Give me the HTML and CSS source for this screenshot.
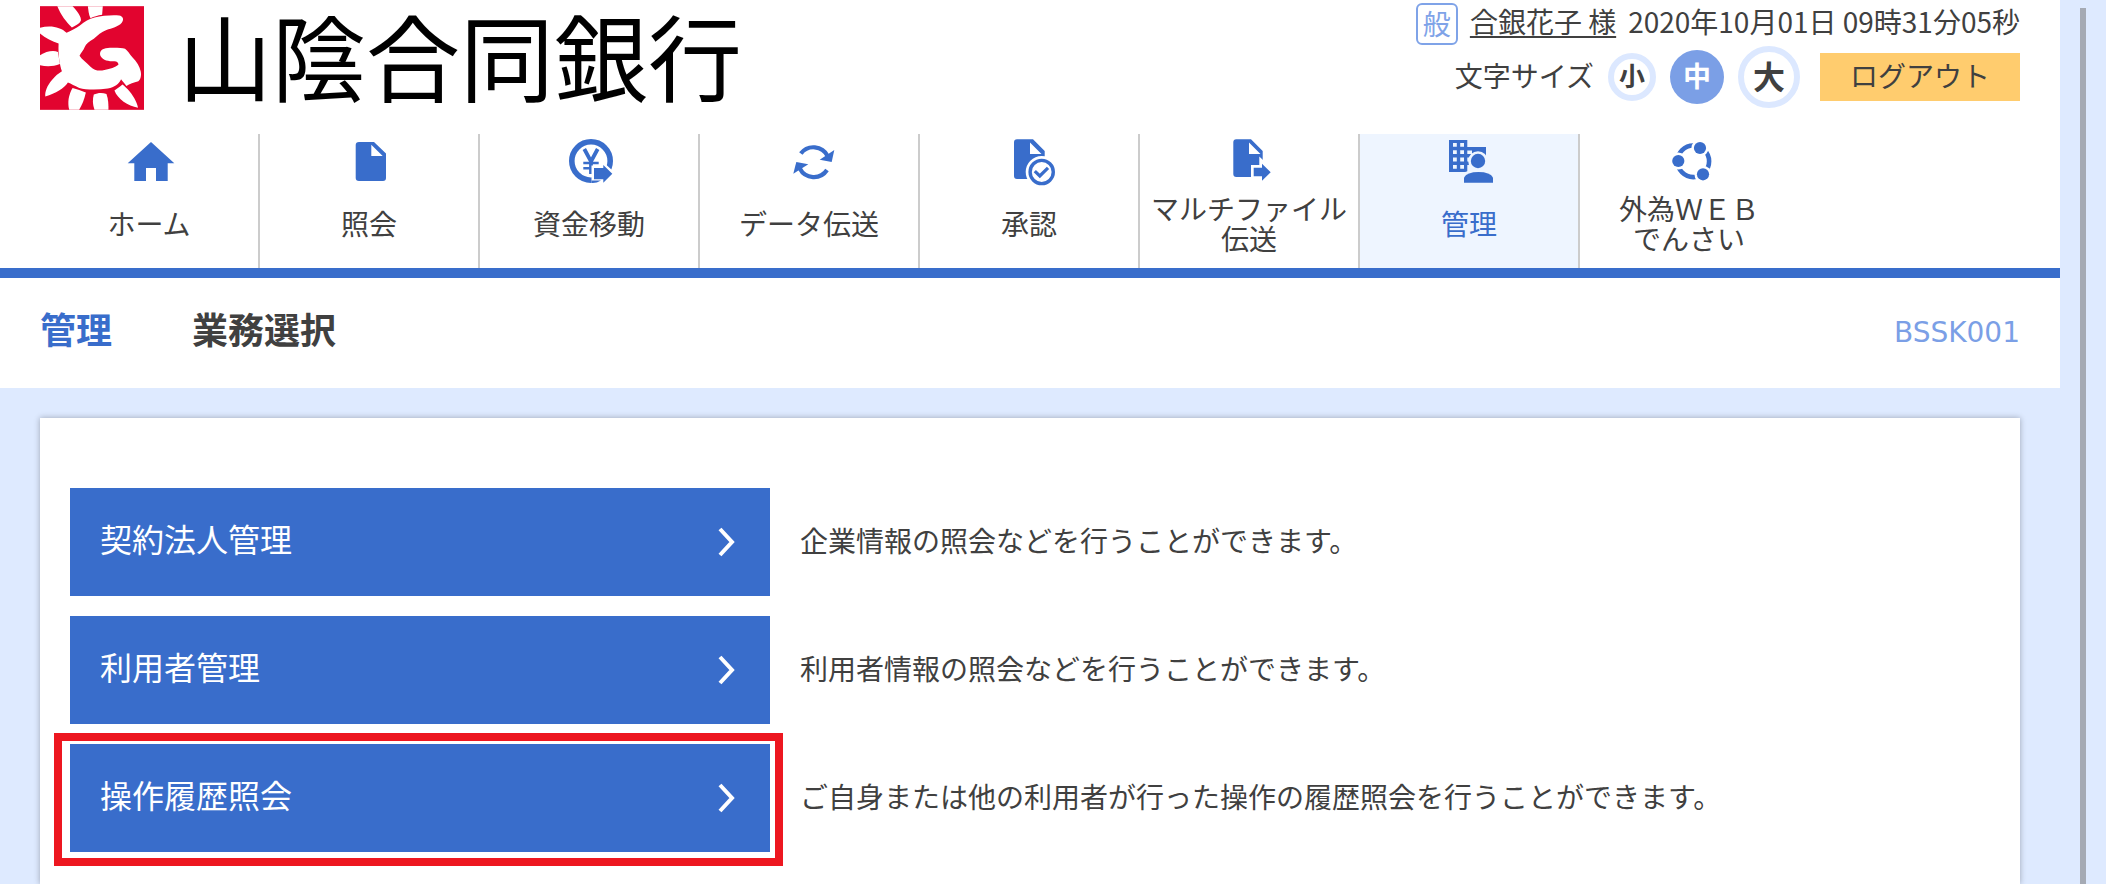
FILE: index.html
```html
<!DOCTYPE html>
<html lang="ja">
<head>
    <meta charset="UTF-8">
    <meta name="viewport" content="width=device-width, initial-scale=1.0">
    <title>業務選択</title>
    <link rel="stylesheet" href="styles.css">
</head>
<body>
    <div class="page">
        <header class="header">
            <div class="brand">
                <svg class="brand-mark" viewBox="12 12 313 312" aria-hidden="true">
                    <rect x="12" y="12" width="313" height="312" fill="#e2042f"/>
                    <g fill="#fff">
                        <path d="M92 92 C108 84 120 78 132 70 C146 58 160 50 176 46 C200 40 232 38 250 40 C262 42 266 52 258 62 C248 74 228 78 212 84 C196 90 186 100 174 110 C160 118 150 126 147 134 C142 146 136 152 131 161 C138 172 152 182 164 194 C176 206 190 208 206 204 C224 200 238 196 248 188 C248 182 244 178 236 178 C218 178 202 176 194 162 C190 150 196 142 210 139 C232 136 256 138 268 140 C276 146 282 156 290 166 C304 180 312 194 315 208 C318 222 314 234 308 238 C294 242 282 246 272 252 C266 244 260 238 256 232 C250 246 236 256 216 260 C186 264 150 264 130 258 C116 252 106 246 96 242 C84 260 60 274 28 284 C26 270 34 250 48 234 C58 222 68 214 78 208 C72 190 66 160 68 124 C50 118 28 108 12 94 L12 77 C42 68 74 74 92 92 Z"/>
                        <path d="M64 12 L110 12 C124 26 138 46 135 56 C130 66 120 70 108 76 C90 58 76 40 64 12 Z"/>
                        <path d="M156 12 L201 12 L199 38 C186 40 174 44 164 48 C158 36 158 24 156 12 Z"/>
                        <path d="M12 160 C30 148 52 144 66 150 L72 186 C52 194 32 194 12 190 Z"/>
                        <path d="M110 258 C124 262 136 266 150 272 C146 292 138 310 130 324 L100 324 C94 302 98 278 110 258 Z"/>
                        <path d="M174 278 C186 272 200 272 212 276 C218 292 218 308 218 324 L176 324 C170 308 170 292 174 278 Z"/>
                        <path d="M236 266 C244 260 254 254 260 248 C266 252 270 258 276 262 C292 280 304 300 307 318 C276 312 246 292 236 266 Z"/>
                    </g>
                </svg>
                <span class="brand-name">山陰合同銀行</span>
            </div>
            <div class="header-tools">
                <div class="user-row">
                    <span class="badge">般</span>
                    <a class="user-name" href="#">合銀花子 様</a>
                    <span class="login-time">2020年10月01日 09時31分05秒</span>
                </div>
                <div class="size-row">
                    <span class="size-label" id="size-label">文字サイズ</span>
                    <div class="size-buttons" role="group" aria-labelledby="size-label">
                        <button class="size-btn small" type="button">小</button>
                        <button class="size-btn medium" type="button" aria-pressed="true">中</button>
                        <button class="size-btn large" type="button">大</button>
                    </div>
                    <button class="logout-btn" type="button">ログアウト</button>
                </div>
            </div>
        </header>

        <nav class="nav">
            <a class="nav-item" href="#">
                <svg class="icon" viewBox="0 0 48 48" aria-hidden="true">
                    <path d="M26 5 L49.3 26.3 H42.7 V44 H31 V31 H21 V44 H9.3 V26.3 H2.7 Z"/>
                </svg>
                <span class="nav-label">ホーム</span>
            </a>
            <a class="nav-item" href="#">
                <svg class="icon" viewBox="0 0 48 48" aria-hidden="true">
                    <path fill-rule="evenodd" d="M14 5 H29 L41 16.5 V41 Q41 44 38 44 H14 Q10.7 44 10.7 41 V8 Q10.7 5 14 5 Z M26.3 7.7 V19 H37.7 Z"/>
                </svg>
                <span class="nav-label">照会</span>
            </a>
            <a class="nav-item" href="#">
                <svg class="icon" viewBox="0 0 48 48" aria-hidden="true">
                    <circle class="line" cx="26" cy="24" r="19.2" stroke-width="5.6"/>
                    <path class="line" stroke-width="3.8" d="M19.3 12 L26 24.5 L32.7 12 M26 23 V37"/>
                    <path class="line" stroke-width="2.6" d="M18.3 26 H33.7 M18.3 31.3 H33.7"/>
                    <path class="halo" d="M26.5 28.5 H36 V23 L51 36.7 L39 49 L36 46 H26.5 Z"/>
                    <path d="M29 31 H38.3 V28 L47.3 36.7 L38.3 45.7 V42.3 H29 Z"/>
                    <path d="M26.5 43.5 H36 Q31 46.5 26.5 46 Z"/>
                </svg>
                <span class="nav-label">資金移動</span>
            </a>
            <a class="nav-item" href="#">
                <svg class="icon" viewBox="0 0 48 48" aria-hidden="true">
                    <path class="line" stroke-width="4.2" d="M15.8 16.6 A15.8 15.8 0 0 1 42.6 19"/>
                    <path class="line" stroke-width="4.2" d="M42 33 A15.8 15.8 0 0 1 14.8 31.5"/>
                    <path d="M49.3 13 L46.7 25 L34.7 22.7 Z"/>
                    <path d="M11.3 25 L23.3 27.3 L8.3 36.7 Z"/>
                </svg>
                <span class="nav-label">データ伝送</span>
            </a>
            <a class="nav-item" href="#">
                <svg class="icon" viewBox="0 0 48 48" aria-hidden="true">
                    <path fill-rule="evenodd" d="M12 2.3 H28 L39.7 14 V42 H12 Q9 42 9 39 V5.3 Q9 2.3 12 2.3 Z M25 5.5 V17 H36.5 Z"/>
                    <circle class="halo" cx="36.7" cy="35" r="16"/>
                    <circle class="line" cx="36.7" cy="35" r="11.6" stroke-width="3.4"/>
                    <path class="line" stroke-width="3.2" d="M29.8 34.2 L34.8 39 L43 30.8"/>
                </svg>
                <span class="nav-label">承認</span>
            </a>
            <a class="nav-item" href="#">
                <svg class="icon" viewBox="0 0 48 48" aria-hidden="true">
                    <path fill-rule="evenodd" d="M11.3 2.3 H26 L37.7 14 V40 H11.3 Q8.3 40 8.3 37 V5.3 Q8.3 2.3 11.3 2.3 Z M24 5.5 V17 H35.5 Z"/>
                    <path class="halo" d="M26 28 H34.3 V19.5 L38 23 L48 35 L39 44 H26 Z"/>
                    <path d="M28.7 30.7 H37 V26.7 L45.7 35.2 L37 43.7 V39.3 H28.7 Z"/>
                </svg>
                <span class="nav-label">マルチファイル<br>伝送</span>
            </a>
            <a class="nav-item active" href="#">
                <svg class="icon" viewBox="0 0 48 48" aria-hidden="true">
                    <path d="M4 3 H22.3 V10 H41 V35 H4 Z"/>
                    <path class="halo" d="M8 6 h3.8 v3.8 h-3.8 Z M15.2 6 h3.8 v3.8 h-3.8 Z M8 13.3 h3.8 v3.8 h-3.8 Z M15.2 13.3 h3.8 v3.8 h-3.8 Z M8 20.6 h3.8 v3.8 h-3.8 Z M15.2 20.6 h3.8 v3.8 h-3.8 Z M8 27.9 h3.8 v3.8 h-3.8 Z M15.2 27.9 h3.8 v3.8 h-3.8 Z M22.3 13.6 H27 V17 H22.3 Z M22.3 20.6 H26 V24.4 H22.3 Z M22.3 28 H41 V35 H22.3 Z"/>
                    <circle class="halo" cx="33" cy="24" r="9.8"/>
                    <path class="halo" d="M16 46 V40 Q19 32.5 33 32.5 H42 V46 Z"/>
                    <circle cx="33" cy="24" r="7.2"/>
                    <path d="M19 45.7 V40.5 Q22 35 33.5 35 Q45 35 48 40.5 V45.7 Z"/>
                </svg>
                <span class="nav-label">管理</span>
            </a>
            <a class="nav-item" href="#">
                <svg class="icon" viewBox="0 0 48 48" aria-hidden="true">
                    <circle class="line" cx="28.3" cy="24.3" r="15.8" stroke-width="4.6"/>
                    <g class="halo">
                        <circle cx="13.3" cy="24" r="8.6"/>
                        <circle cx="35" cy="11" r="8.6"/>
                        <circle cx="38" cy="37.3" r="8.6"/>
                    </g>
                    <circle cx="13.3" cy="24" r="6.1"/>
                    <circle cx="35" cy="11" r="6.1"/>
                    <circle cx="38" cy="37.3" r="6.1"/>
                </svg>
                <span class="nav-label">外為ＷＥＢ<br>でんさい</span>
            </a>
        </nav>

        <div class="title-bar">
            <h1 class="category">管理</h1>
            <h2 class="screen-title">業務選択</h2>
            <span class="screen-id">BSSK001</span>
        </div>

        <main class="panel">
            <div class="menu-row">
                <a class="menu-btn" href="#">
                    <span class="menu-name">契約法人管理</span>
                    <svg class="chevron" viewBox="0 0 18 30" aria-hidden="true"><path d="M3 2 L15 15 L3 28"/></svg>
                </a>
                <p class="menu-text">企業情報の照会などを行うことができます。</p>
            </div>
            <div class="menu-row">
                <a class="menu-btn" href="#">
                    <span class="menu-name">利用者管理</span>
                    <svg class="chevron" viewBox="0 0 18 30" aria-hidden="true"><path d="M3 2 L15 15 L3 28"/></svg>
                </a>
                <p class="menu-text">利用者情報の照会などを行うことができます。</p>
            </div>
            <div class="menu-row">
                <a class="menu-btn marked" href="#">
                    <span class="menu-name">操作履歴照会</span>
                    <svg class="chevron" viewBox="0 0 18 30" aria-hidden="true"><path d="M3 2 L15 15 L3 28"/></svg>
                </a>
                <p class="menu-text">ご自身または他の利用者が行った操作の履歴照会を行うことができます。</p>
            </div>
        </main>
    </div>
    <div class="gutter">
        <div class="scroll-thumb"></div>
    </div>
</body>
</html>
```

FILE: styles.css
```css
* {
    box-sizing: border-box;
}
body {
    margin: 0;
    display: flex;
    min-height: 100vh;
    background-color: #deeaff;
    color: #404040;
    font-family: "Noto Sans CJK JP", sans-serif;
    font-size: 28px;
}
a {
    color: inherit;
    text-decoration: none;
}
button {
    font-family: inherit;
    color: inherit;
    padding: 0;
    border: none;
    cursor: pointer;
}
.page {
    flex: 1;
    min-width: 0;
    display: flex;
    flex-direction: column;
}

/* header */
.header {
    display: flex;
    justify-content: space-between;
    align-items: flex-start;
    padding: 0 40px 24px;
    background-color: white;
}
.brand {
    display: flex;
    align-items: flex-start;
    gap: 34px;
    padding-top: 6px;
}
.brand-mark {
    width: 104px;
    height: 104px;
}
.brand-name {
    font-size: 94px;
    line-height: 96px;
    color: black;
    white-space: nowrap;
}
.header-tools {
    display: flex;
    flex-direction: column;
    align-items: flex-end;
    gap: 1px;
    padding-top: 3px;
    white-space: nowrap;
}
.user-row {
    display: flex;
    line-height: 36px;
}
.badge {
    width: 42px;
    height: 42px;
    margin-right: 12px;
    border: 2px solid #7fa3e8;
    border-radius: 6px;
    color: #7fa3e8;
    line-height: 36px;
    text-align: center;
}
.user-name {
    margin-right: 12px;
    text-decoration: underline;
    text-decoration-thickness: 2px;
    text-underline-offset: 3px;
}
.size-row {
    display: flex;
    align-items: center;
}
.size-label {
    margin-right: 14px;
    padding-bottom: 4px;
}
.size-buttons {
    display: flex;
    align-items: center;
    gap: 14px;
    margin-right: 20px;
}
.size-btn {
    border: 6px solid #dce8ff;
    border-radius: 50%;
    background-color: white;
    font-weight: bold;
    line-height: 1;
    padding-bottom: 4px;
}
.size-btn.small {
    width: 48px;
    height: 48px;
    font-size: 26px;
}
.size-btn.medium {
    width: 54px;
    height: 54px;
    border: none;
    background-color: #7b9fe6;
    color: white;
    font-size: 28px;
}
.size-btn.large {
    width: 62px;
    height: 62px;
    font-size: 32px;
}
.logout-btn {
    width: 200px;
    height: 48px;
    padding-bottom: 4px;
    background-color: #ffcc6e;
    font-size: 28px;
    line-height: 44px;
}

/* global navigation */
.nav {
    display: flex;
    padding: 0 40px;
    background-color: white;
    border-bottom: 10px solid #396dcb;
}
.nav-item {
    flex: 0 1 220px;
    height: 134px;
    padding-top: 3px;
    border-right: 2px solid #cccccc;
    text-align: center;
}
.nav-item:last-child {
    border-right: none;
    padding-right: 2px;
}
.icon {
    display: block;
    width: 48px;
    height: 48px;
    margin: 0 auto 8px;
    overflow: visible;
    fill: #396dcb;
}
.icon .line {
    fill: none;
    stroke: #396dcb;
}
.icon .halo {
    fill: white;
}
.nav-label {
    display: flex;
    justify-content: center;
    align-items: center;
    height: 60px;
    line-height: 30px;
    white-space: nowrap;
}
.nav-item.active {
    background-color: #eef5ff;
    color: #396dcb;
}
.nav-item.active .halo {
    fill: #eef5ff;
}

/* screen title */
.title-bar {
    display: flex;
    align-items: center;
    height: 110px;
    padding: 0 40px;
    background-color: white;
}
.category,
.screen-title {
    margin: 0;
    padding-bottom: 10px;
    font-size: 36px;
    line-height: 36px;
}
.category {
    margin-right: 80px;
    color: #396dcb;
}
.screen-id {
    margin-left: auto;
    padding-bottom: 2px;
    color: #7b9fe6;
    font-family: "DejaVu Sans", sans-serif;
    font-size: 28px;
}

/* menu */
.panel {
    flex: 1;
    display: flex;
    flex-direction: column;
    gap: 20px;
    margin: 30px 40px 0;
    padding: 70px 30px 20px;
    background-color: white;
    box-shadow: 0 0 6px rgba(0, 0, 0, 0.3);
}
.menu-row {
    display: flex;
    align-items: center;
    gap: 30px;
}
.menu-btn {
    position: relative;
    display: flex;
    justify-content: space-between;
    align-items: center;
    flex: 0 1 700px;
    height: 108px;
    padding: 0 35px 0 30px;
    background-color: #396dcb;
    color: white;
    font-size: 32px;
}
.menu-btn.marked::after {
    content: "";
    position: absolute;
    inset: -11px -13px -14px -16px;
    border: 8px solid #ed1720;
}
.menu-name {
    padding-bottom: 8px;
}
.menu-text {
    margin: 0;
    padding-bottom: 4px;
}
.chevron {
    width: 18px;
    height: 30px;
    fill: none;
    stroke: white;
    stroke-width: 4px;
}

/* scroll bar column */
.gutter {
    flex: 0 0 46px;
    display: flex;
    padding: 8px 20px 0;
}
.scroll-thumb {
    flex: 1;
    background-color: #a5aab4;
}
```
